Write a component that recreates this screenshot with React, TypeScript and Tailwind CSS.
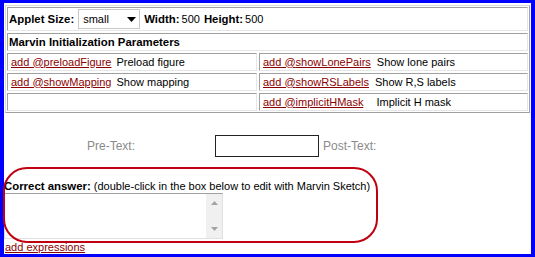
import React from 'react';

const linkCls = 'text-[#8b0000] underline';
const cellCls =
  'border border-t-[#a0a0a0] border-l-[#a0a0a0] border-b-[#e6e6e6] border-r-[#e6e6e6] h-[18px] flex items-center';

interface Param {
  name: string;
  label: string;
  gap: string;
}

const leftParams: (Param | null)[] = [
  { name: 'preloadFigure', label: 'Preload figure', gap: 'ml-[5px]' },
  { name: 'showMapping', label: 'Show mapping', gap: 'ml-[5px]' },
  null,
];

const rightParams: Param[] = [
  { name: 'showLonePairs', label: 'Show lone pairs', gap: 'ml-[6px]' },
  { name: 'showRSLabels', label: 'Show R,S labels', gap: 'ml-[6px]' },
  { name: 'implicitHMask', label: 'Implicit H mask', gap: 'ml-[13px]' },
];

const ParamCell: React.FC<{ param: Param | null }> = ({ param }) => (
  <div className={`${cellCls} pl-[3px]`}>
    {param && (
      <>
        <a href="#" className={linkCls}>
          add @{param.name}
        </a>
        <span className={param.gap}>{param.label}</span>
      </>
    )}
  </div>
);

const Arrow: React.FC<{ down?: boolean; color: string; w: number; h: number }> = ({
  down,
  color,
  w,
  h,
}) => (
  <svg width={w} height={h} viewBox={`0 0 ${w} ${h}`}>
    <polygon
      points={down ? `0,0 ${w},0 ${w / 2},${h}` : `0,${h} ${w},${h} ${w / 2},0`}
      fill={color}
    />
  </svg>
);

const App: React.FC = () => {
  return (
    <div className="w-[535px] h-[257px] bg-white border-l-4 border-r-4 border-t-[3px] border-b-[3px] border-[#0000ff] relative font-['Liberation_Sans',Arial,sans-serif] text-[11px] leading-[13px] text-black">
      {/* parameters table */}
      <div className="mx-[1px] mt-[2px] border border-t-[#dcdcdc] border-l-[#dcdcdc] border-r-[#a0a0a0] border-b-[#a0a0a0] p-[1px] flex flex-col gap-[2px]">
        <div className={`${cellCls} !h-[24px] pl-[1px]`}>
          <span className="font-bold text-[11.4px]">Applet Size:</span>
          <div className="ml-[4px] w-[62px] h-[20px] border border-[#c8c8c8] bg-white flex items-center pl-[4px] pr-[3px]">
            <span className="flex-1">small</span>
            <Arrow down color="#000" w={9} h={5} />
          </div>
          <span className="ml-[4px] font-bold text-[11.4px]">Width:</span>
          <span className="ml-[2px]">500</span>
          <span className="ml-[4px] font-bold text-[11.4px]">Height:</span>
          <span className="ml-[2px]">500</span>
        </div>
        <div className={`${cellCls} pl-[1px]`}>
          <span className="font-bold text-[11.4px]">Marvin Initialization Parameters</span>
        </div>
        <div className="grid grid-cols-[250px_1fr] gap-[2px]">
          {leftParams.map((p, i) => (
            <React.Fragment key={i}>
              <ParamCell param={p} />
              <ParamCell param={rightParams[i]} />
            </React.Fragment>
          ))}
        </div>
      </div>

      {/* pre / post text */}
      <div className="mt-[22px] flex items-center pl-[83px]">
        <span className="w-[128px] text-[12px] text-[#8a8a8a]">Pre-Text:</span>
        <div className="w-[104px] h-[22px] border border-[#222] bg-white" />
        <span className="ml-[4px] text-[12px] text-[#8a8a8a]">Post-Text:</span>
      </div>

      {/* correct answer */}
      <div className="mt-[23px]">
        <span className="font-bold text-[11.4px]">Correct answer:</span>{' '}
        <span>(double-click in the box below to edit with Marvin Sketch)</span>
      </div>
      <div className="w-[219px] h-[46px] flex border border-t-[#a0a0a0] border-l-[#dcdcdc] border-b-[#e0e0e0] border-r-[#e0e0e0]">
        <div className="flex-1 bg-white" />
        <div className="w-[16px] bg-[#f0f0f0] flex flex-col items-center justify-between py-[7px]">
          <Arrow color="#a3a3a3" w={7} h={4} />
          <Arrow down color="#a3a3a3" w={7} h={4} />
        </div>
      </div>
      <div className="mt-[2px] pl-[1px]">
        <a href="#" className={linkCls}>
          add expressions
        </a>
      </div>

      {/* red annotation */}
      <div className="absolute left-[-1px] top-[164px] w-[375px] h-[76px] border-2 border-[#c00010] rounded-[24px] pointer-events-none" />
    </div>
  );
};

export default App;
